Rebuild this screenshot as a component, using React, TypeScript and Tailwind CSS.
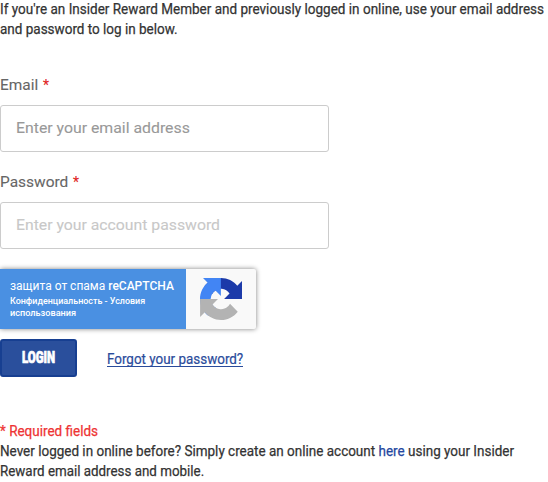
import { useLayoutEffect, useRef, useState } from "react";
import type { ReactNode } from "react";

// A single line of type fitted horizontally to a given width.
function Line({ width, className = "", children }: { width: number; className?: string; children: ReactNode }) {
  const ref = useRef<HTMLSpanElement>(null);
  const [scale, setScale] = useState(1);
  useLayoutEffect(() => {
    if (ref.current) setScale(width / ref.current.offsetWidth);
  }, [width]);
  return (
    <span className="flex" style={{ width }}>
      <span
        ref={ref}
        className={`block shrink-0 origin-left whitespace-nowrap ${className}`}
        style={{ transform: `scaleX(${scale})` }}
      >
        {children}
      </span>
    </span>
  );
}

function RecaptchaLogo() {
  return (
    <svg className="h-[42px] w-[42px]" viewBox="0 0 64 64">
      <path fill="#1c3aa9" d="M64 31.955l-.033-1.37V4.687l-7.16 7.16C50.948 4.674 42.033.093 32.05.093c-10.4 0-19.622 4.96-25.458 12.64l11.736 11.86a15.55 15.55 0 0 1 4.754-5.334c2.05-1.6 4.952-2.906 8.968-2.906.485 0 .86.057 1.135.163 4.976.393 9.288 3.14 11.828 7.124l-8.307 8.307L64 31.953" />
      <path fill="#4285f4" d="M31.862.094l-1.37.033H4.594l7.16 7.16C4.58 13.147 0 22.06 0 32.046c0 10.4 4.96 19.622 12.64 25.458L24.5 45.768a15.55 15.55 0 0 1-5.334-4.754c-1.6-2.05-2.906-4.952-2.906-8.968 0-.485.057-.86.163-1.135.393-4.976 3.14-9.288 7.124-11.828l8.307 8.307L31.862.096" />
      <path fill="#b3b3b3" d="M.094 32.045l.033 1.37v25.898l7.16-7.16c5.86 7.173 14.774 11.754 24.76 11.754 10.4 0 19.622-4.96 25.458-12.64l-11.736-11.86a15.55 15.55 0 0 1-4.754 5.334c-2.05 1.6-4.952 2.906-8.968 2.906-.485 0-.86-.057-1.135-.163-4.976-.393-9.288-3.14-11.828-7.124l8.307-8.307L.094 32.046" />
    </svg>
  );
}

export default function App() {
  return (
    <main className="h-[482px] w-[548px] overflow-hidden bg-white font-['Roboto','Liberation_Sans',sans-serif] text-[15px] leading-5 text-[#333]">
      <div className="-mt-px h-[76px] [-webkit-text-stroke:0.25px]">
        <Line width={544}>If you're an Insider Reward Member and previously logged in online, use your email address</Line>
        <Line width={178}>and password to log in below.</Line>
      </div>

      <form>
        <div className="flex h-[30px] gap-[5px] text-[15px] text-[#666] [-webkit-text-stroke:0.1px]">
          <Line width={38}>Email</Line>
          <span className="text-[14px] text-[#e02020]">*</span>
        </div>
        <div className="flex h-[47px] w-[329px] items-center rounded-[3px] border border-[#ccc] pb-0.5 pl-[15px] text-[15px] text-[#999] [-webkit-text-stroke:0.1px]">
          <Line width={174}>Enter your email address</Line>
        </div>
        <div className="mt-5 flex h-[30px] gap-[5px] text-[15px] text-[#666] [-webkit-text-stroke:0.1px]">
          <Line width={68}>Password</Line>
          <span className="text-[14px] text-[#e02020]">*</span>
        </div>
        <div className="flex h-[47px] w-[329px] items-center rounded-[3px] border border-[#ccc] pb-0.5 pl-[15px] text-[15px] text-[#c8c8c8] [-webkit-text-stroke:0.1px]">
          <Line width={204}>Enter your account password</Line>
        </div>

        <div className="mt-5 flex h-[60px] w-64 rounded-[2px] bg-[#f9f9f9] shadow-[0_0_5px_gray]">
          <div className="w-[186px] bg-[#4a90e2] pl-2.5 pt-[9px] text-white">
            <Line width={164} className="mb-px text-[12px] leading-4">
              защита от спама <strong className="font-medium">reCAPTCHA</strong>
            </Line>
            <Line width={135} className="text-[9px] font-medium leading-3">Конфиденциальность - Условия</Line>
            <Line width={66} className="text-[9px] font-medium leading-3">использования</Line>
          </div>
          <div className="pl-3.5 pt-[9px]">
            <RecaptchaLogo />
          </div>
        </div>

        <div className="mt-2.5 flex h-[38px]">
          <button type="button" className="flex w-[77px] items-center rounded-[3px] border-2 border-[#173f91] bg-[#2a4f9c] pl-5 text-[16px] font-black text-white [-webkit-text-stroke:0.7px]">
            <Line width={33}>LOGIN</Line>
          </button>
          <a className="ml-[30px] mt-2.5 h-[18px] border-b border-[#2a4b9b] text-[#2a4b9b] [-webkit-text-stroke:0.2px]">
            <Line width={136}>Forgot your password?</Line>
          </a>
        </div>
      </form>

      <div className="mt-[44px] [-webkit-text-stroke:0.25px]">
        <Line width={98} className="text-[#ee3333]">* Required fields</Line>
        <Line width={514}>
          Never logged in online before? Simply create an online account <a className="text-[#2447a0]">here</a> using your Insider
        </Line>
        <Line width={204}>Reward email address and mobile.</Line>
      </div>
    </main>
  );
}
